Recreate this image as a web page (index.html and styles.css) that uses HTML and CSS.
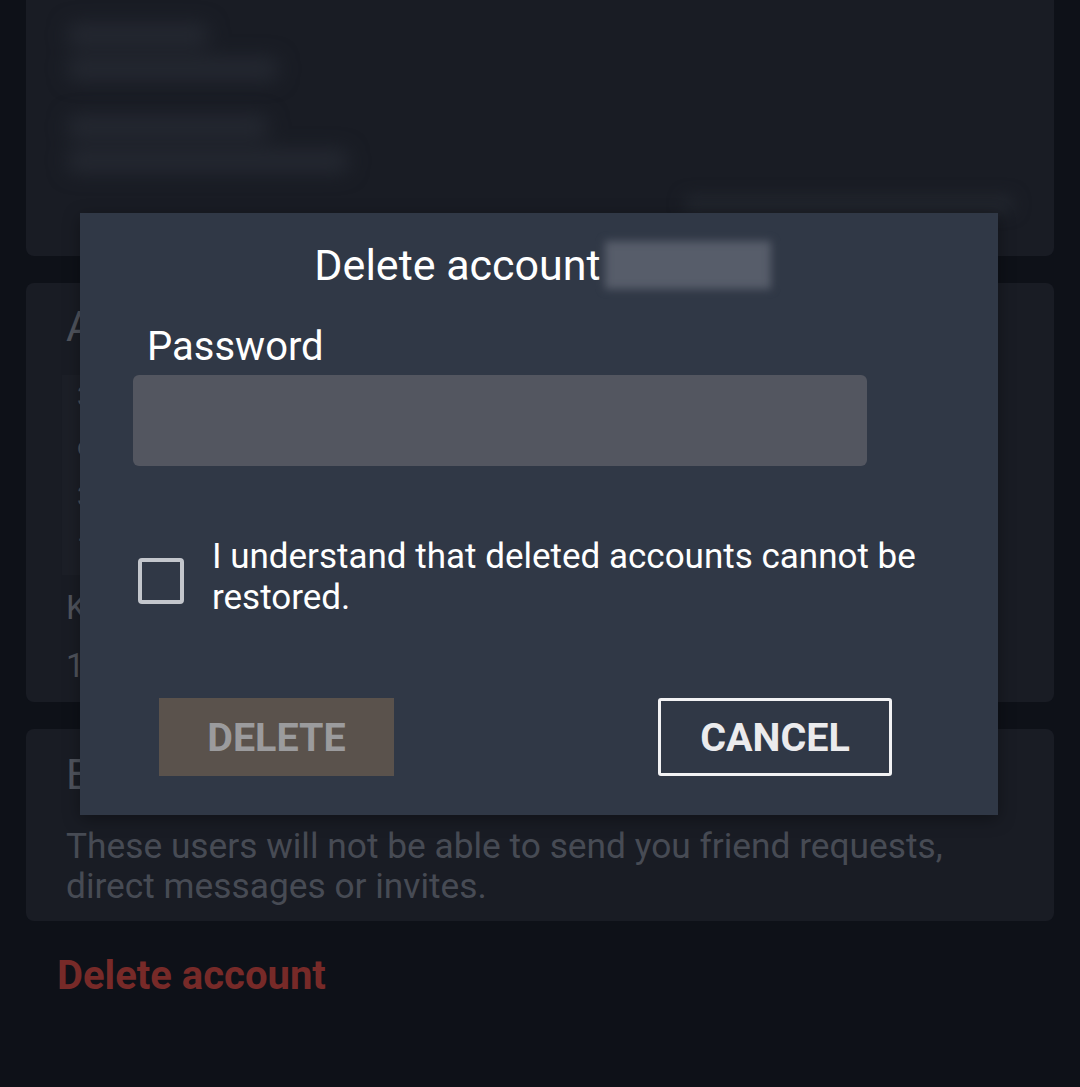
FILE: index.html
```html
<!DOCTYPE html>
<html lang="en">
<head>
<meta charset="utf-8">
<title>Delete account</title>
<link rel="stylesheet" href="styles.css">
</head>
<body>
<div class="page">
  <section class="card card-top">
    <div class="blur-group">
      <div class="blob b1"></div>
      <div class="blob b2"></div>
    </div>
    <div class="blur-group g2">
      <div class="blob b3"></div>
      <div class="blob b4"></div>
    </div>
    <div class="blob b5"></div>
  </section>

  <section class="card card-mid">
    <h2 class="card-title">Account</h2>
    <div class="inner-box">
      <span>3</span>
      <span>c</span>
      <span>3</span>
      <span>1</span>
    </div>
    <div class="meta-label">Key</div>
    <div class="meta-value">1</div>
  </section>

  <section class="card card-blocked">
    <h2 class="card-title">Blocked users</h2>
    <p class="card-text">These users will not be able to send you friend requests, direct messages or invites.</p>
  </section>

  <div class="danger-link">Delete account</div>
</div>

<div class="modal">
  <div class="modal-title">
    <span>Delete account</span>
    <span class="redacted"></span>
  </div>
  <label class="field-label">Password</label>
  <div class="input"></div>
  <div class="check-row">
    <span class="checkbox"></span>
    <span class="check-text">I understand that deleted accounts cannot be restored.</span>
  </div>
  <div class="actions">
    <button class="btn btn-delete">DELETE</button>
    <button class="btn btn-cancel">CANCEL</button>
  </div>
</div>
</body>
</html>
```

FILE: styles.css
```css
* { box-sizing: border-box; }

html, body {
  margin: 0;
  padding: 0;
  background: #0e1118;
  width: 1080px;
  height: 1087px;
  overflow: hidden;
  font-family: Roboto, "Noto Sans", sans-serif;
}

.page {
  padding: 0 26px;
  display: flex;
  flex-direction: column;
  gap: 27px;
}

.card {
  background: #191c24;
  border-radius: 8px;
  position: relative;
  overflow: hidden;
}

.card-top {
  height: 256px;
  border-radius: 0 0 8px 8px;
}

.blur-group {
  padding: 24px 0 0 42px;
  display: flex;
  flex-direction: column;
  gap: 12px;
  filter: blur(10px);
}

.g2 { padding-top: 36px; }

.blob {
  background: #252932;
  height: 22px;
  border-radius: 6px;
}

.b1 { width: 140px; }
.b2 { width: 210px; }
.b3 { width: 200px; }
.b4 { width: 280px; }

.b5 {
  position: absolute;
  right: 40px;
  top: 196px;
  width: 330px;
  height: 16px;
  filter: blur(8px);
  background: #22262e;
}

.card-mid {
  height: 419px;
  padding: 20px 40px 0;
}

.card-title {
  margin: 0;
  font-weight: 400;
  font-size: 42px;
  line-height: 48px;
  color: #50545d;
}

.inner-box {
  margin: 24px 0 0 -4px;
  height: 200px;
  width: 200px;
  background: #1c1f27;
  display: flex;
  flex-direction: column;
  padding: 2px 0 0 15px;
  gap: 10px;
  font-size: 28px;
  line-height: 40px;
  color: #50545d;
}

.meta-label,
.meta-value {
  font-size: 33px;
  line-height: 58px;
  color: #50545d;
}

.meta-label { margin-top: 4px; }

.card-blocked {
  height: 192px;
  padding: 22px 40px 0;
}

.card-text {
  margin: 27px 0 0;
  font-size: 35.3px;
  line-height: 40px;
  color: #474b54;
  width: 940px;
}

.danger-link {
  margin: 3px 0 0 31px;
  font-size: 40px;
  font-weight: 700;
  line-height: 50px;
  color: #772a28;
}

/* modal */
.modal {
  position: absolute;
  left: 80px;
  top: 213px;
  width: 918px;
  height: 602px;
  background: #303846;
  box-shadow: 0 4px 16px rgba(0, 0, 0, 0.35);
  padding-top: 27px;
  display: flex;
  flex-direction: column;
  color: #ffffff;
}

.modal-title {
  display: flex;
  justify-content: center;
  align-items: center;
  gap: 4px;
  font-size: 43px;
  line-height: 50px;
  height: 50px;
  padding-left: 7px;
}

.redacted {
  display: inline-block;
  width: 166px;
  height: 48px;
  background: #575d6a;
  filter: blur(4px);
}

.field-label {
  margin: 34px 0 0 67px;
  font-size: 40px;
  line-height: 46px;
}

.input {
  margin: 5px 0 0 53px;
  width: 734px;
  height: 91px;
  background: #535660;
  border-radius: 6px;
}

.check-row {
  margin: 70px 0 0 58px;
  display: flex;
  align-items: center;
  gap: 28px;
}

.checkbox {
  flex: none;
  width: 46px;
  height: 46px;
  border: 4px solid #c3c6cc;
  border-radius: 4px;
  margin-top: 7px;
}

.check-text {
  font-size: 35px;
  line-height: 41px;
  width: 740px;
}

.actions {
  margin-top: 80px;
  display: flex;
  justify-content: space-between;
  padding: 0 106px 0 79px;
}

.btn {
  font-family: Roboto, "Noto Sans", sans-serif;
  font-weight: 700;
  font-size: 39.5px;
  height: 78px;
  width: 235px;
  border: none;
  padding: 0;
}

.btn-delete {
  background: #5a524c;
  color: #9b9b9d;
}

.btn-cancel {
  width: 234px;
  background: transparent;
  border: 3px solid #f2f2f4;
  border-radius: 3px;
  color: #ebebed;
}
```
